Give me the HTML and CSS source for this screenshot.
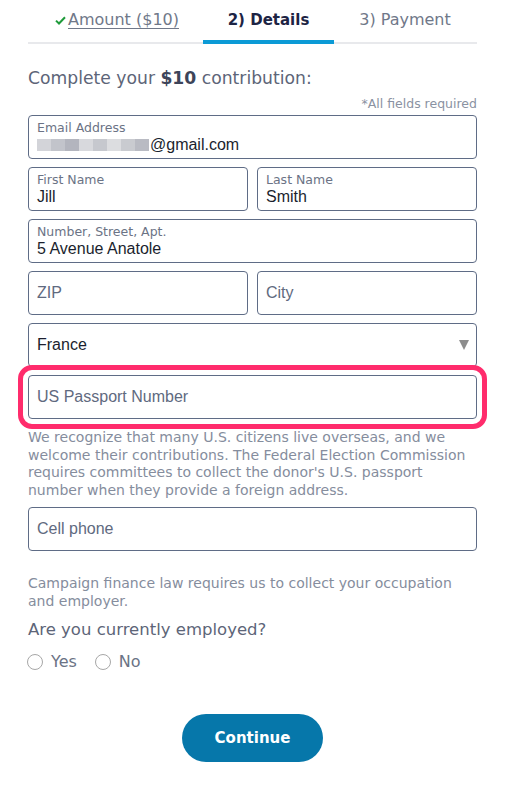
FILE: index.html
```html
<!DOCTYPE html>
<html lang="en">
  <head>
    <meta charset="UTF-8" />
    <meta name="viewport" content="width=device-width, initial-scale=1.0" />
    <title>Contribution – Details</title>
    <link rel="stylesheet" href="styles.css">
  </head>
  <body>
    <div class="page">
      <nav class="steps">
        <a class="step done" href="#"><svg class="check" width="11" height="9" viewBox="0 0 11 9"><path d="M1 4.6 L4 7.5 L10 1.2" fill="none" stroke="#1e9a3a" stroke-width="2"/></svg><u>Amount ($10)</u></a>
        <span class="step active">2) Details</span>
        <span class="step last">3) Payment</span>
      </nav>

      <h2 class="lead">Complete your <strong>$10</strong> contribution:</h2>
      <p class="required">*All fields required</p>

      <div class="field filled">
        <label>Email Address</label>
        <div class="value"><span class="blur"><i></i><i></i><i></i><i></i><i></i><i></i><i></i><i></i></span>@gmail.com</div>
      </div>

      <div class="row">
        <div class="field filled">
          <label>First Name</label>
          <div class="value">Jill</div>
        </div>
        <div class="field filled">
          <label>Last Name</label>
          <div class="value">Smith</div>
        </div>
      </div>

      <div class="field filled">
        <label>Number, Street, Apt.</label>
        <div class="value">5 Avenue Anatole</div>
      </div>

      <div class="row">
        <div class="field"><span class="placeholder">ZIP</span></div>
        <div class="field"><span class="placeholder">City</span></div>
      </div>

      <div class="field select">
        <span class="value">France</span>
        <span class="arrow"></span>
      </div>

      <div class="field highlight"><span class="placeholder">US Passport Number</span></div>

      <p class="note">We recognize that many U.S. citizens live overseas, and we welcome their contributions. The Federal Election Commission requires committees to collect the donor's U.S. passport number when they provide a foreign address.</p>

      <div class="field"><span class="placeholder">Cell phone</span></div>

      <p class="note law">Campaign finance law requires us to collect your occupation and employer.</p>
      <p class="question">Are you currently employed?</p>
      <div class="radios">
        <label class="radio"><span class="dot"></span>Yes</label>
        <label class="radio"><span class="dot"></span>No</label>
      </div>

      <div class="actions">
        <button class="continue">Continue</button>
      </div>
    </div>
  </body>
</html>
```

FILE: styles.css
```css
body {
  margin: 0;
  background: #fff;
  font-family: "DejaVu Sans", sans-serif;
  color: #5d6578;
}
.page {
  width: 449px;
  margin-left: 28px;
}
.steps {
  display: flex;
  height: 42px;
  padding-left: 3px;
  border-bottom: 2px solid #e8e9ec;
}
.step {
  box-sizing: border-box;
  width: 131px;
  padding-top: 10px;
  text-align: center;
  white-space: nowrap;
  font-size: 16px;
  color: #707889;
  text-decoration: none;
}
.step.done {
  width: 172px;
}
.step.last {
  width: 142px;
}
.step.done u {
  text-decoration-thickness: 1px;
  text-underline-offset: 3px;
}
.check {
  margin-right: 2px;
  vertical-align: 0;
}
.step.active {
  padding-top: 11px;
  font-size: 15px;
  color: #1d2444;
  font-weight: bold;
  border-bottom: 4px solid #0b9ad6;
  margin-bottom: -2px;
}
.lead {
  margin: 24px 0 0;
  font-size: 17.2px;
  font-weight: normal;
  color: #5d6578;
}
.lead strong {
  color: #3d4459;
}
.required {
  margin: 8px 0 4px;
  text-align: right;
  font-size: 12.5px;
  color: #8a92a2;
}
.field {
  position: relative;
  box-sizing: border-box;
  height: 44px;
  border: 1px solid #5f6c86;
  border-radius: 4px;
  padding: 0 8px;
  margin-bottom: 8px;
  display: flex;
  flex-direction: column;
  justify-content: center;
}
.field label {
  font-size: 12.5px;
  color: #6b7385;
  line-height: 15px;
  margin-top: 1px;
}
.field .value {
  font-family: "Liberation Sans", Arial, sans-serif;
  font-size: 16px;
  color: #1b1f2e;
  line-height: 20px;
}
.placeholder {
  font-family: "Liberation Sans", Arial, sans-serif;
  font-size: 16px;
  color: #5f6a80;
}
.row {
  display: grid;
  grid-template-columns: 220px 220px;
  column-gap: 9px;
}
.blur {
  display: inline-flex;
  vertical-align: -1px;
  height: 12px;
  margin-right: 1px;
}
.blur i {
  width: 14px;
  height: 12px;
  background: #d3d4d9;
}
.blur i:nth-child(2) { background: #c2c4cb; }
.blur i:nth-child(3) { background: #b3b5be; }
.blur i:nth-child(4) { background: #d8d9dd; }
.blur i:nth-child(5) { background: #c6c8ce; }
.blur i:nth-child(6) { background: #dcdde0; }
.blur i:nth-child(7) { background: #c9cbd0; }
.blur i:nth-child(8) { background: #b9bbc3; }
.select {
  flex-direction: row;
  align-items: center;
  justify-content: space-between;
}
.arrow {
  width: 0;
  height: 0;
  border-left: 5px solid transparent;
  border-right: 5px solid transparent;
  border-top: 10px solid #8d8d8d;
  margin-right: -1px;
}
.highlight {
  outline: 5px solid #ff2c6c;
  outline-offset: 5px;
}
.note {
  margin: 10px 0 7px;
  font-size: 14px;
  line-height: 17.7px;
  color: #858d9d;
}
.law {
  margin: 24px 0 8px;
}
.question {
  margin: 0;
  font-size: 16.5px;
  line-height: 24px;
  color: #5d6578;
}
.radios {
  display: flex;
  gap: 19px;
  margin-top: 10px;
}
.radio {
  display: flex;
  align-items: center;
  gap: 8px;
  font-size: 16px;
  color: #6b7385;
}
.dot {
  width: 14px;
  height: 14px;
  border: 1px solid #a7a7a7;
  border-radius: 50%;
  margin-left: -1px;
}
.actions {
  display: flex;
  justify-content: center;
  margin-top: 43px;
}
.continue {
  width: 141px;
  height: 48px;
  border: none;
  border-radius: 24px;
  background: #0677aa;
  color: #fff;
  font-family: "DejaVu Sans", sans-serif;
  font-weight: bold;
  font-size: 15px;
}
```
